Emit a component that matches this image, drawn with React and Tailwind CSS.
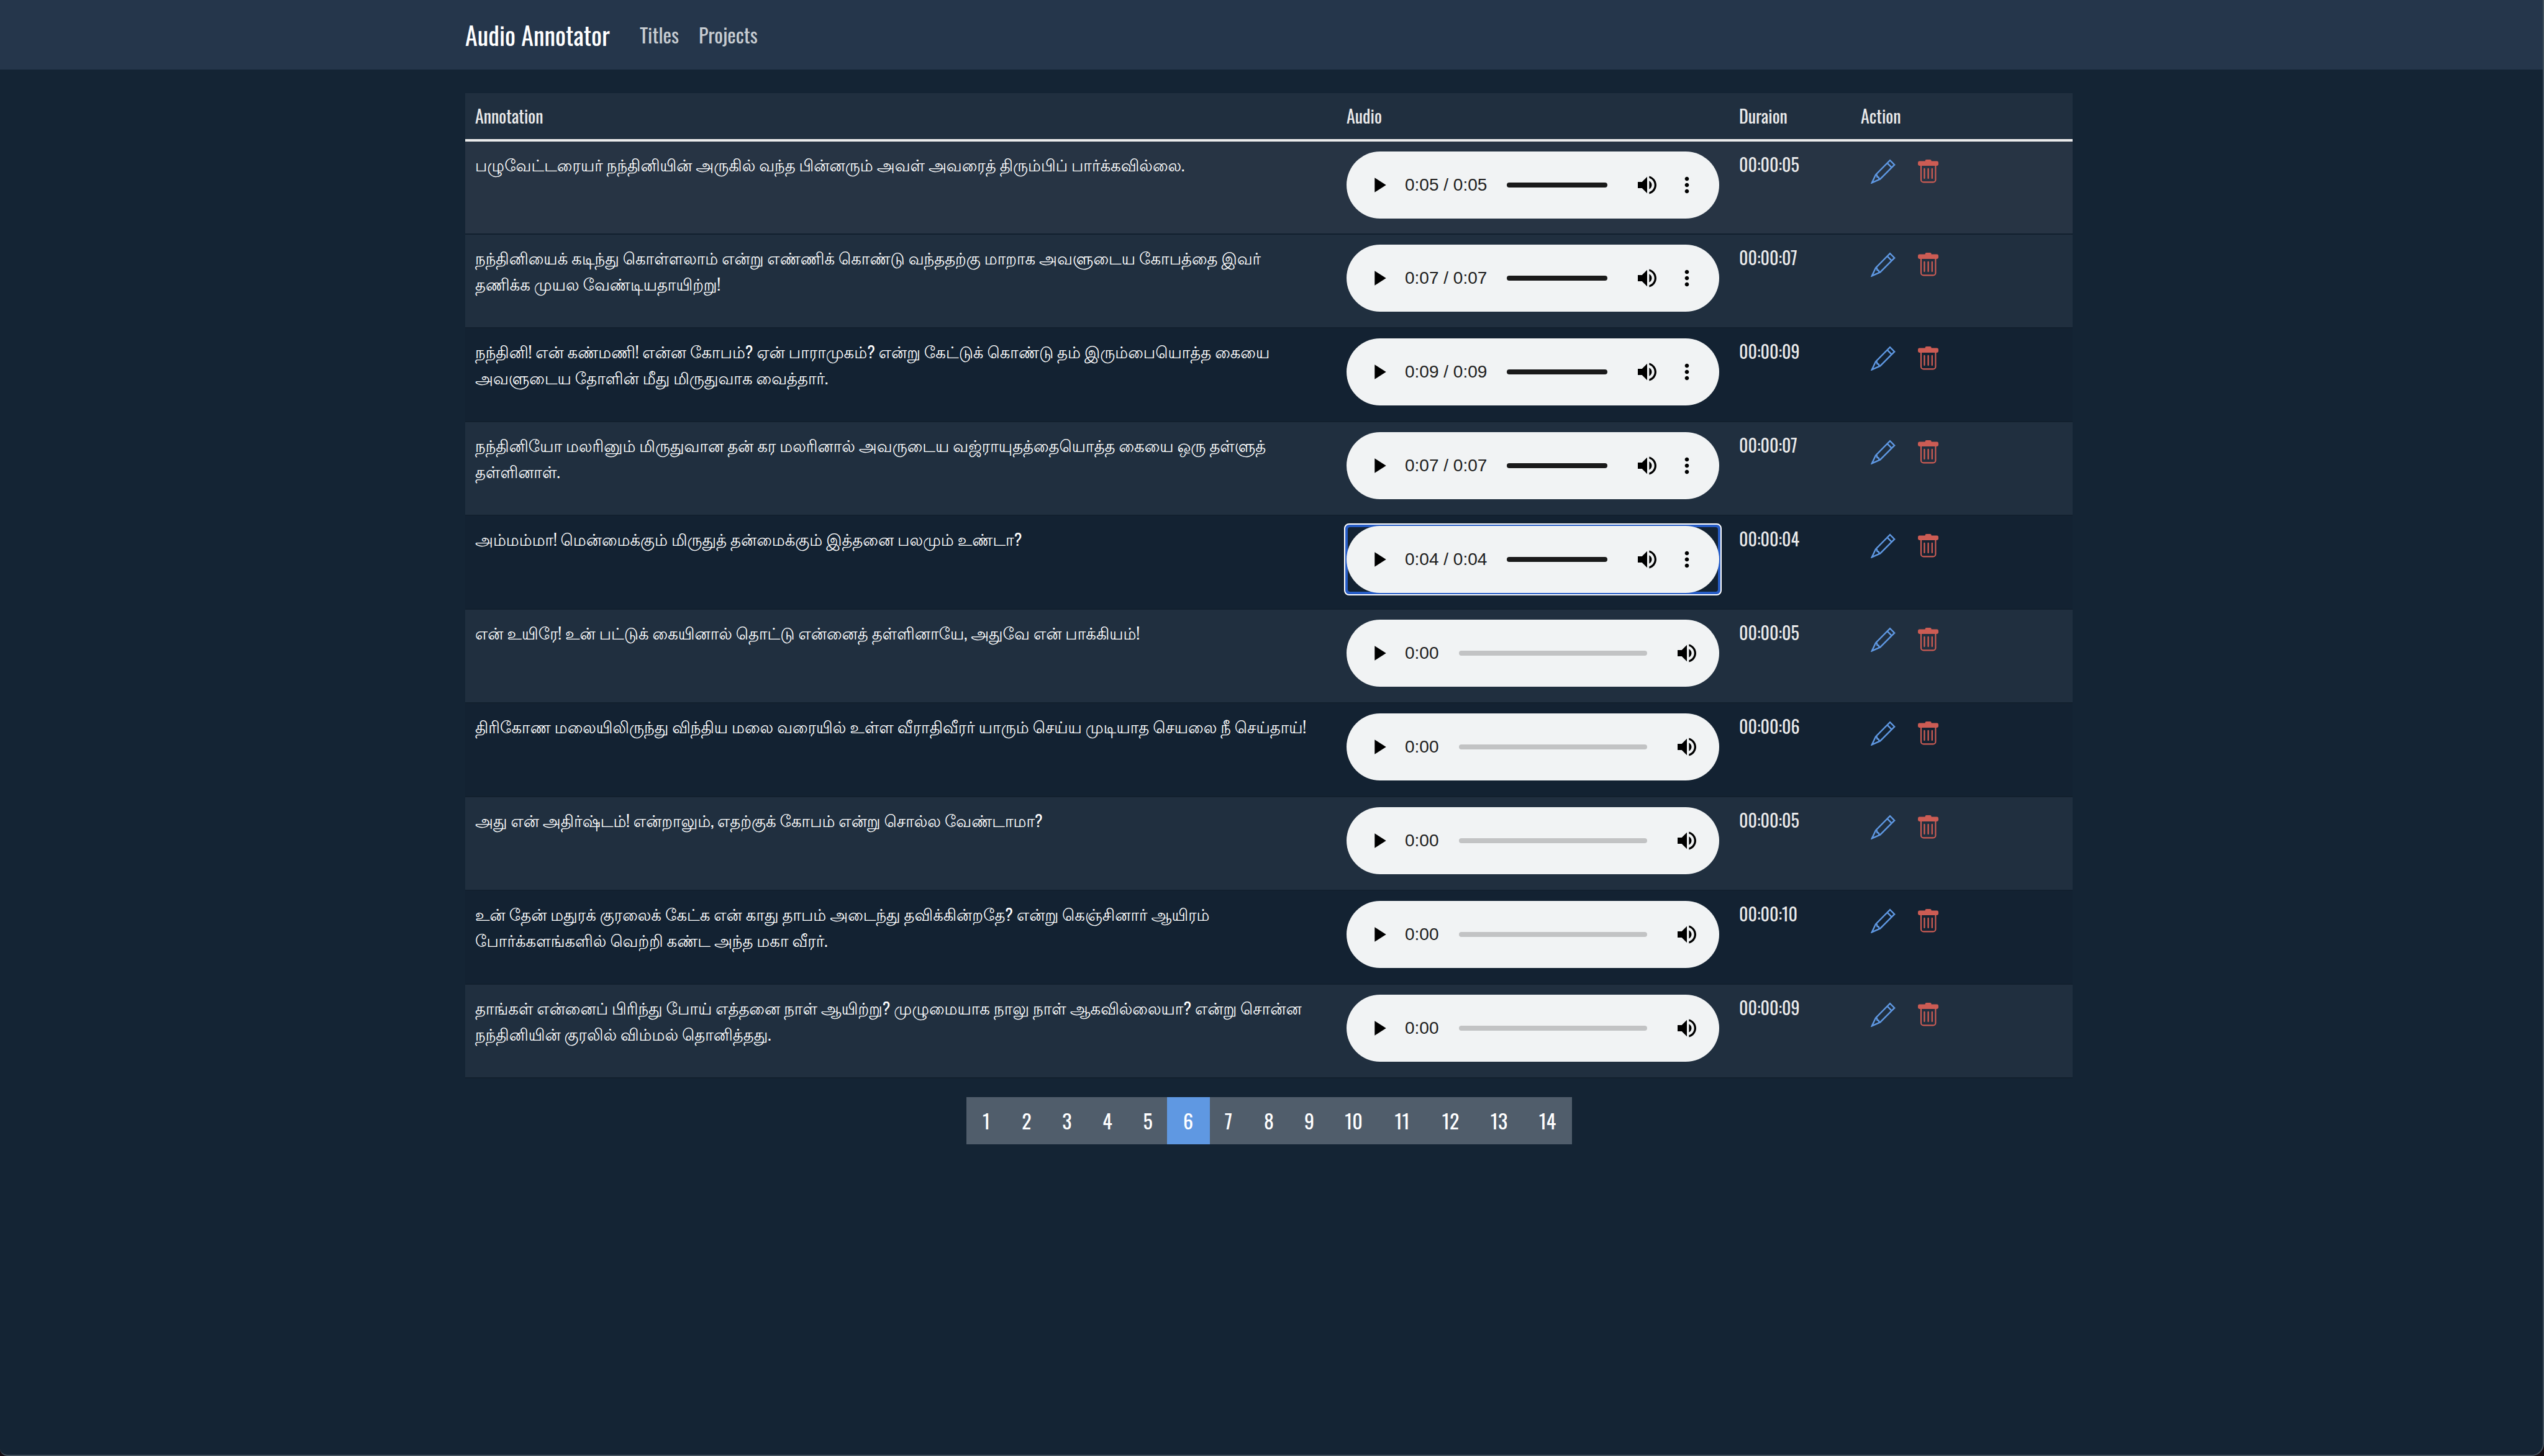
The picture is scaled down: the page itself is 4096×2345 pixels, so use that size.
const ROWS = [
  { lines: ["பழுவேட்டரையர் நந்தினியின் அருகில் வந்த பின்னரும் அவள் அவரைத் திரும்பிப் பார்க்கவில்லை."], clip: "0:05", loaded: true, duration: "00:00:05" },
  { lines: ["நந்தினியைக் கடிந்து கொள்ளலாம் என்று எண்ணிக் கொண்டு வந்ததற்கு மாறாக அவளுடைய கோபத்தை இவர்", "தணிக்க முயல வேண்டியதாயிற்று!"], clip: "0:07", loaded: true, duration: "00:00:07" },
  { lines: ["நந்தினி! என் கண்மணி! என்ன கோபம்? ஏன் பாராமுகம்? என்று கேட்டுக் கொண்டு தம் இரும்பையொத்த கையை", "அவளுடைய தோளின் மீது மிருதுவாக வைத்தார்."], clip: "0:09", loaded: true, duration: "00:00:09" },
  { lines: ["நந்தினியோ மலரினும் மிருதுவான தன் கர மலரினால் அவருடைய வஜ்ராயுதத்தையொத்த கையை ஒரு தள்ளுத்", "தள்ளினாள்."], clip: "0:07", loaded: true, duration: "00:00:07" },
  { lines: ["அம்மம்மா! மென்மைக்கும் மிருதுத் தன்மைக்கும் இத்தனை பலமும் உண்டா?"], clip: "0:04", loaded: true, focused: true, duration: "00:00:04" },
  { lines: ["என் உயிரே! உன் பட்டுக் கையினால் தொட்டு என்னைத் தள்ளினாயே, அதுவே என் பாக்கியம்!"], duration: "00:00:05" },
  { lines: ["திரிகோண மலையிலிருந்து விந்திய மலை வரையில் உள்ள வீராதிவீரர் யாரும் செய்ய முடியாத செயலை நீ செய்தாய்!"], duration: "00:00:06" },
  { lines: ["அது என் அதிர்ஷ்டம்! என்றாலும், எதற்குக் கோபம் என்று சொல்ல வேண்டாமா?"], duration: "00:00:05" },
  { lines: ["உன் தேன் மதுரக் குரலைக் கேட்க என் காது தாபம் அடைந்து தவிக்கின்றதே? என்று கெஞ்சினார் ஆயிரம்", "போர்க்களங்களில் வெற்றி கண்ட அந்த மகா வீரர்."], duration: "00:00:10" },
  { lines: ["தாங்கள் என்னைப் பிரிந்து போய் எத்தனை நாள் ஆயிற்று? முழுமையாக நாலு நாள் ஆகவில்லையா? என்று சொன்ன", "நந்தினியின் குரலில் விம்மல் தொனித்தது."], duration: "00:00:09" },
];

const PAGES = [1, 2, 3, 4, 5, 6, 7, 8, 9, 10, 11, 12, 13, 14];
const CURRENT_PAGE = 6;

function rowColor(index) {
  if (index === 0) return "bg-[#273444]";
  return index % 2 === 1 ? "bg-[#202f3f]" : "bg-[#132232]";
}

function PencilIcon() {
  return (
    <svg viewBox="0 0 40 40" className="size-10" fill="none" stroke="currentColor" strokeWidth="2.4" aria-hidden="true">
      <path d="M1.8 38.4 8 25.4 31 2.2 38.2 9.4 15.2 32.4Z" />
      <path d="M26.6 6.6 33.8 13.8M8 25.4 10 26.4 10.4 29 12.6 29.6 13.4 31.6 15.2 32.4" />
      <path d="M0.8 39.4 4.6 37.8 2.4 35.6Z" fill="currentColor" stroke="none" />
    </svg>
  );
}

function TrashIcon() {
  return (
    <svg viewBox="0 0 33 38" className="h-[38px] w-[33px]" fill="none" stroke="currentColor" strokeLinecap="round" aria-hidden="true">
      <rect x="0" y="2.6" width="33" height="7.4" rx="2.4" fill="currentColor" stroke="none" />
      <rect x="11.6" y="0" width="10" height="5" rx="2" fill="currentColor" stroke="none" />
      <path d="M5 9.5V32.4a4 4 0 0 0 4 4H24.4a4 4 0 0 0 4-4V9.5" strokeWidth="2.1" />
      <path d="M10.4 15V30M16.6 15V30M22.8 15V30" strokeWidth="2.3" />
    </svg>
  );
}

function PlayerIcon({ d }) {
  return (
    <svg viewBox="0 0 24 24" className="size-10" fill="currentColor" aria-hidden="true">
      <path d={d} />
    </svg>
  );
}

const PLAY = "M8 5v14l11-7z";
const VOLUME =
  "M3 9v6h4l5 5V4L7 9H3zm13.5 3c0-1.77-1.02-3.29-2.5-4.03v8.05c1.48-.73 2.5-2.25 2.5-4.02zM14 3.23v2.06c2.89.86 5 3.54 5 6.71s-2.11 5.85-5 6.71v2.06c4.01-.91 7-4.49 7-8.77s-2.99-7.86-7-8.77z";
const MORE =
  "M12 8c1.1 0 2-.9 2-2s-.9-2-2-2-2 .9-2 2 .9 2 2 2zm0 2c-1.1 0-2 .9-2 2s.9 2 2 2 2-.9 2-2-.9-2-2-2zm0 6c-1.1 0-2 .9-2 2s.9 2 2 2 2-.9 2-2-.9-2-2-2z";

function AudioPlayer({ clip, loaded, focused }) {
  return (
    <div className="relative">
      {focused && (
        <div className="absolute -inset-1 rounded-lg border-2 border-white bg-[#265cc6] p-1">
          <div className="h-full rounded-sm bg-[#132232]" />
        </div>
      )}
      <div className="relative flex h-[108px] items-center rounded-full bg-[#f1f3f4] px-8 font-['Liberation_Sans',sans-serif] text-[28px] leading-10 text-black">
        <button type="button" aria-label="Play">
          <PlayerIcon d={PLAY} />
        </button>
        <span className="ml-[22px] whitespace-nowrap text-[#202020]">{loaded ? `${clip} / ${clip}` : "0:00"}</span>
        <div className={`mr-11 ml-8 h-2 flex-1 rounded-full ${loaded ? "bg-[#1a1a1a]" : "bg-[#c2c3c4]"}`} />
        <button type="button" aria-label="Mute">
          <PlayerIcon d={VOLUME} />
        </button>
        {loaded && (
          <button type="button" aria-label="More options" className="ml-6">
            <PlayerIcon d={MORE} />
          </button>
        )}
      </div>
    </div>
  );
}

export default function App() {
  return (
    <div className="min-h-screen bg-[#140c12] font-['Oswald','Lohit_Tamil',sans-serif] text-[28px] leading-[42px] text-[#ebebeb]">
      <div className="min-h-screen rounded-br-[20px] rounded-bl-[12px] border-r-2 border-b-2 border-[#42505c] bg-[#142434]">
        <header className="bg-[#25364b] pr-2">
          <nav className="mx-auto flex h-28 w-full max-w-[2588px] items-center">
            <a href="#" className="text-[40px] leading-[60px] text-white">Audio Annotator</a>
            <div className="ml-12 flex gap-8 text-[32px] leading-[48px] text-[#c8cdd2]">
              <a href="#titles">Titles</a>
              <a href="#projects">Projects</a>
            </div>
          </nav>
        </header>

        <main className="pr-2">
          <div className="mx-auto w-full max-w-[2588px] pt-[38px]">
            <table className="w-full table-fixed border-collapse text-left">
              <colgroup>
                <col />
                <col className="w-[632px]" />
                <col className="w-[196px]" />
                <col className="w-[357px]" />
              </colgroup>
              <thead>
                <tr className="border-b-4 border-[#ebebeb] bg-[#202f3f]">
                  <th className="p-4 font-normal">Annotation</th>
                  <th className="p-4 font-normal">Audio</th>
                  <th className="p-4 font-normal">Duraion</th>
                  <th className="p-4 font-normal">Action</th>
                </tr>
              </thead>
              <tbody>
                {ROWS.map((row, i) => (
                  <tr key={i} className={`h-[151px] border-b-2 border-[#12202e] align-top ${rowColor(i)}`}>
                    <td className="p-4 text-[26px] whitespace-nowrap text-white">
                      {row.lines.map((line) => (
                        <span key={line} className="block">{line}</span>
                      ))}
                    </td>
                    <td className="px-4 pt-4">
                      <AudioPlayer clip={row.clip} loaded={row.loaded} focused={row.focused} />
                    </td>
                    <td className="p-4">{row.duration}</td>
                    <td className="px-4 pt-7">
                      <div className="flex gap-9 pl-4">
                        <button type="button" aria-label="Edit" className="h-10 text-[#5f98e2]">
                          <PencilIcon />
                        </button>
                        <button type="button" aria-label="Delete" className="h-10 text-[#cc5c54]">
                          <TrashIcon />
                        </button>
                      </div>
                    </td>
                  </tr>
                ))}
              </tbody>
            </table>

            <nav aria-label="Pages" className="mt-[30px] flex justify-center text-[32px] leading-[48px] text-white">
              {PAGES.map((page) => (
                <button
                  key={page}
                  type="button"
                  aria-current={page === CURRENT_PAGE ? "page" : undefined}
                  className={`h-[76px] ${
                    page === CURRENT_PAGE
                      ? "z-10 -mx-0.5 w-[69px] bg-[#5f98e2]"
                      : page > 9
                        ? "w-[78px] bg-[#505d6b]"
                        : "w-[65px] bg-[#505d6b]"
                  }`}
                >
                  {page}
                </button>
              ))}
            </nav>
          </div>
        </main>
      </div>
    </div>
  );
}
